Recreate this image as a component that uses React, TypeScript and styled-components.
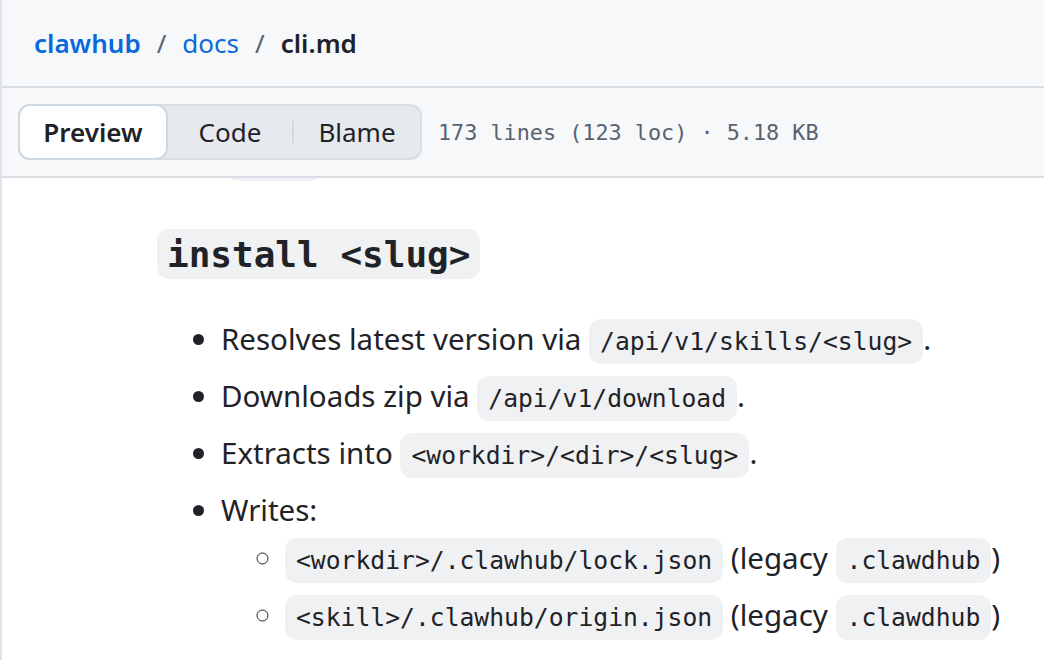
import React from "react";
import styled, { createGlobalStyle } from "styled-components";

const Global = createGlobalStyle`
  html, body { margin: 0; padding: 0; background: #ffffff; }
  body { font-family: "Noto Sans", "Segoe UI", sans-serif; color: #1f2328; }
  * { box-sizing: border-box; }
`;

const SANS = `"Noto Sans", "Segoe UI", "Liberation Sans", sans-serif`;
const MONO = `"DejaVu Sans Mono", "Liberation Mono", monospace`;

const Frame = styled.div`
  width: 1044px;
  height: 660px;
  border-left: 2px solid #dfe3e8;
  display: flex;
  flex-direction: column;
  overflow: hidden;
`;

const Header = styled.div`
  height: 88px;
  flex: none;
  background: #f6f8fa;
  border-bottom: 2px solid #d8dee4;
  display: flex;
  align-items: center;
  padding-left: 32px;
  font-family: ${SANS};
  font-size: 26px;
  gap: 16px;
`;

const Crumb = styled.span<{ $bold?: boolean; $link?: boolean }>`
  color: ${(p) => (p.$link ? "#0969da" : "#1f2328")};
  font-weight: ${(p) => (p.$bold ? 600 : 400)};
`;

const Sep = styled.span`
  color: #59636e;
`;

const Toolbar = styled.div`
  height: 90px;
  flex: none;
  background: #f6f8fa;
  border-bottom: 2px solid #d8dee4;
  display: flex;
  align-items: center;
  padding-left: 16px;
  gap: 16px;
`;

const Segmented = styled.div`
  display: flex;
  align-items: stretch;
  height: 56px;
  background: #e6eaef;
  border: 2px solid #d8dee4;
  border-radius: 12px;
  font-family: ${SANS};
  font-size: 26px;
`;

const SegButton = styled.div<{ $selected?: boolean; $width: number }>`
  width: ${(p) => p.$width}px;
  display: flex;
  align-items: center;
  justify-content: center;
  color: #1f2328;
  font-weight: ${(p) => (p.$selected ? 600 : 400)};
  ${(p) =>
    p.$selected
      ? `
    background: #ffffff;
    border: 2px solid #d1d9e0;
    border-radius: 12px;
    margin: -2px 0 -2px -2px;
  `
      : ""}
`;

const SegDivider = styled.div`
  width: 2px;
  align-self: center;
  height: 22px;
  background: #d1d9e0;
`;

const Meta = styled.div`
  font-family: ${MONO};
  font-size: 21.8px;
  color: #59636e;
`;

const Content = styled.div`
  flex: 1;
  overflow: hidden;
  background: #ffffff;
`;

const Article = styled.div`
  padding-left: 155px;
  font-family: ${SANS};
  font-size: 29.5px;
  color: #1f2328;
`;

const Hidden = styled.ul`
  margin: -46px 0 0 0;
  padding-left: 68px;
  list-style: none;
  line-height: 48px;
`;

const H3 = styled.h3`
  margin: 47px 0 38px 0;
  font-size: 40px;
  line-height: 50px;
  font-weight: 600;
`;

const HeadCode = styled.code`
  font-family: ${MONO};
  font-size: 36px;
  line-height: 1;
  font-weight: 700;
  background: #eff1f3;
  border-radius: 12px;
  padding: 5px 10px 4px;
`;

const List = styled.ul<{ $nested?: boolean }>`
  margin: 0;
  padding-left: 64px;
  list-style-type: ${(p) => (p.$nested ? "circle" : "disc")};
  line-height: 48px;
`;

const Item = styled.li`
  & + & {
    margin-top: 9px;
  }
`;

const Code = styled.code`
  font-family: ${MONO};
  font-size: 24.7px;
  line-height: 1;
  background: #eff1f3;
  border-radius: 12px;
  padding: 8px 11px;
`;

export default function App() {
  return (
    <>
      <Global />
      <Frame>
        <Header>
          <Crumb $link $bold>clawhub</Crumb>
          <Sep>/</Sep>
          <Crumb $link>docs</Crumb>
          <Sep>/</Sep>
          <Crumb $bold>cli.md</Crumb>
        </Header>
        <Toolbar>
          <Segmented>
            <SegButton $selected $width={150}>Preview</SegButton>
            <SegButton $width={124}>Code</SegButton>
            <SegDivider />
            <SegButton $width={126}>Blame</SegButton>
          </Segmented>
          <Meta>173 lines (123 loc) · 5.18 KB</Meta>
        </Toolbar>
        <Content>
          <Article>
            <Hidden>
              <Item>
                <Code>{"\u00a0\u00a0\u00a0\u00a0\u00a0"}</Code>
              </Item>
            </Hidden>
            <H3>
              <HeadCode>install &lt;slug&gt;</HeadCode>
            </H3>
            <List>
              <Item>
                Resolves latest version via <Code>/api/v1/skills/&lt;slug&gt;</Code>.
              </Item>
              <Item>
                Downloads zip via <Code>/api/v1/download</Code>.
              </Item>
              <Item>
                Extracts into <Code>&lt;workdir&gt;/&lt;dir&gt;/&lt;slug&gt;</Code>.
              </Item>
              <Item>
                Writes:
                <List $nested>
                  <Item>
                    <Code>&lt;workdir&gt;/.clawhub/lock.json</Code> (legacy <Code>.clawdhub</Code>)
                  </Item>
                  <Item>
                    <Code>&lt;skill&gt;/.clawhub/origin.json</Code> (legacy <Code>.clawdhub</Code>)
                  </Item>
                </List>
              </Item>
            </List>
          </Article>
        </Content>
      </Frame>
    </>
  );
}
